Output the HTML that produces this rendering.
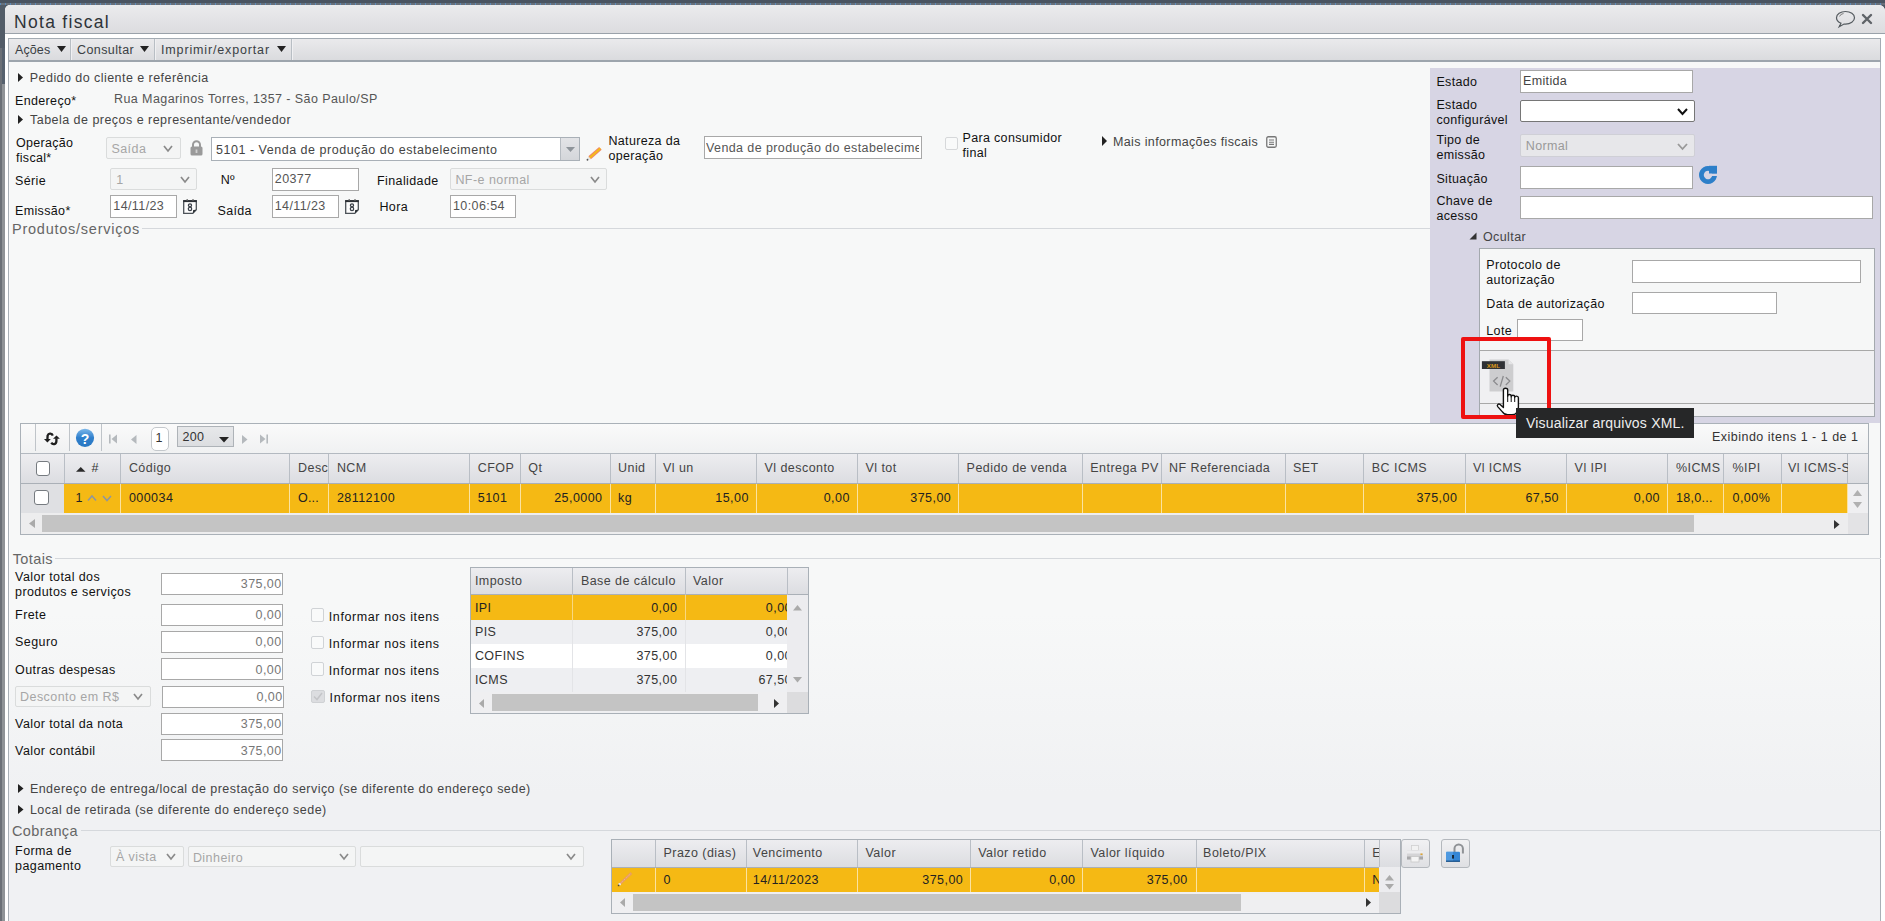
<!DOCTYPE html>
<html><head><meta charset="utf-8"><style>
html,body{margin:0;padding:0;width:1885px;height:921px;overflow:hidden;background:#4e5966;}
body{position:relative;font-family:"Liberation Sans",sans-serif;}
.t{position:absolute;white-space:nowrap;}
.r{position:absolute;}
svg.r{overflow:visible;}
</style></head><body>
<div class="r" style="left:0px;top:0px;width:1885px;height:5px;background:#4a5461;"></div>
<div class="r" style="left:0px;top:3px;width:1885px;height:2px;background:repeating-linear-gradient(90deg,#5c8fc4 0 1px,#6b737d 1px 5px);opacity:0.9;"></div>
<div class="r" style="left:0px;top:5px;width:5px;height:916px;background:#56606c;"></div>
<div class="r" style="left:5px;top:5px;width:1880px;height:916px;background:#fff;border-top-left-radius:5px;border-top-right-radius:6px;"></div>
<div class="r" style="left:5px;top:5px;width:1880px;height:29px;background:linear-gradient(#ebebed,#dcdcdf);border-top-left-radius:5px;border-top-right-radius:6px;border-bottom:1px solid #9aa2aa;box-sizing:border-box;height:29px;"></div>
<div class="t " style="left:14px;top:13.99px;font-size:17.5px;line-height:17.5px;color:#2e3338;letter-spacing:1.3px;">Nota fiscal</div>
<svg class="r" style="left:1835px;top:10px" width="21" height="18" viewBox="0 0 21 18"><path d="M10.5 1.5 C5.5 1.5 1.5 4.3 1.5 7.8 C1.5 10.2 3.3 12.2 6 13.2 L4.2 16.8 L9 14 C9.5 14.05 10 14.1 10.5 14.1 C15.5 14.1 19.5 11.3 19.5 7.8 C19.5 4.3 15.5 1.5 10.5 1.5 Z" fill="none" stroke="#555b60" stroke-width="1.2"/><path d="M4.6 6.4 C5.2 4.8 6.7 3.9 8.5 3.6" fill="none" stroke="#666" stroke-width="0.9"/></svg>
<svg class="r" style="left:1862px;top:14px" width="10" height="10" viewBox="0 0 10 10"><path d="M1 1 L9 9 M9 1 L1 9" stroke="#5f6368" stroke-width="2.4" stroke-linecap="round"/></svg>
<div class="r" style="left:8px;top:34px;width:1873px;height:887px;background:linear-gradient(180deg,#f7f8f8 0px,#f7f8f8 580px,#f0f1f3 760px,#f0f1f3 887px);"></div>
<div class="r" style="left:5px;top:34px;width:3px;height:887px;background:#ffffff;"></div>
<div class="r" style="left:1881px;top:34px;width:4px;height:887px;background:#ffffff;"></div>
<div class="r" style="left:8px;top:34px;width:1873px;height:4px;background:#ffffff;"></div>
<div class="r" style="left:8px;top:60px;width:1px;height:861px;background:#a9b0b7;"></div>
<div class="r" style="left:1880px;top:60px;width:1px;height:861px;background:#a9b0b7;"></div>
<div class="r" style="left:8px;top:38px;width:1873px;height:24px;box-sizing:border-box;border:1px solid #a3abb3;border-bottom:2px solid #9da5ad;background:linear-gradient(#eaeaec,#dadbde);"></div>
<div class="r" style="left:70px;top:39px;width:1px;height:21px;background:#b8bec4;"></div>
<div class="r" style="left:71px;top:39px;width:1px;height:21px;background:#f0f0f2;"></div>
<div class="r" style="left:154px;top:39px;width:1px;height:21px;background:#b8bec4;"></div>
<div class="r" style="left:155px;top:39px;width:1px;height:21px;background:#f0f0f2;"></div>
<div class="r" style="left:291px;top:39px;width:1px;height:21px;background:#b8bec4;"></div>
<div class="r" style="left:292px;top:39px;width:1px;height:21px;background:#f0f0f2;"></div>
<div class="t " style="left:15px;top:43.82px;font-size:12.5px;line-height:12.5px;color:#3a3f44;letter-spacing:0.1px;">Ações</div>
<svg class="r" style="left:57px;top:46px" width="9" height="6"><polygon points="0,0 9,0 4.5,6" fill="#222"/></svg>
<div class="t " style="left:77px;top:43.82px;font-size:12.5px;line-height:12.5px;color:#3a3f44;letter-spacing:0.4px;">Consultar</div>
<svg class="r" style="left:140px;top:46px" width="9" height="6"><polygon points="0,0 9,0 4.5,6" fill="#222"/></svg>
<div class="t " style="left:161px;top:43.82px;font-size:12.5px;line-height:12.5px;color:#3a3f44;letter-spacing:0.85px;">Imprimir/exportar</div>
<svg class="r" style="left:277px;top:46px" width="9" height="6"><polygon points="0,0 9,0 4.5,6" fill="#222"/></svg>
<div class="r" style="left:9px;top:62px;width:1871px;height:6px;background:#f7f8f8;"></div>
<div class="r" style="left:0px;top:5px;width:5px;height:916px;background:#525c68;"></div>
<div class="r" style="left:0px;top:48px;width:2px;height:873px;background:#6b7077;"></div>
<div class="r" style="left:2px;top:48px;width:3px;height:36px;background:#56616e;"></div>
<div class="r" style="left:2px;top:84px;width:3px;height:837px;background:#8f9397;"></div>
<svg class="r" style="left:18px;top:72.5px" width="5" height="9"><polygon points="0,0 5,4.5 0,9" fill="#222"/></svg>
<div class="t " style="left:29.8px;top:72.22px;font-size:12.5px;line-height:12.5px;color:#444;letter-spacing:0.45px;">Pedido do cliente e referência</div>
<div class="t " style="left:15px;top:95.22px;font-size:12.5px;line-height:12.5px;color:#111;letter-spacing:0.35px;">Endereço*</div>
<div class="t " style="left:114px;top:93.22px;font-size:12.5px;line-height:12.5px;color:#555;letter-spacing:0.42px;">Rua Magarinos Torres, 1357 - São Paulo/SP</div>
<svg class="r" style="left:18px;top:114.5px" width="5" height="9"><polygon points="0,0 5,4.5 0,9" fill="#222"/></svg>
<div class="t " style="left:30px;top:114.42px;font-size:12.5px;line-height:12.5px;color:#444;letter-spacing:0.47px;">Tabela de preços e representante/vendedor</div>
<div class="t " style="left:16px;top:137.42px;font-size:12.5px;line-height:12.5px;color:#111;letter-spacing:0.3px;">Operação</div>
<div class="t " style="left:16px;top:151.62px;font-size:12.5px;line-height:12.5px;color:#111;letter-spacing:0.3px;">fiscal*</div>
<div class="r" style="left:106px;top:137px;width:75px;height:22px;box-sizing:border-box;border:1px solid #dadcdc;background:#f4f5f5;border-radius:2px;"></div>
<div class="t " style="left:111.4px;top:143.42px;font-size:12.5px;line-height:12.5px;color:#a6a6a6;letter-spacing:0.45px;">Saída</div>
<svg class="r" style="left:163px;top:144.5px" width="10" height="8" viewBox="0 0 10 8"><polyline points="1,1 5.0,6 9,1" fill="none" stroke="#8a8a8a" stroke-width="1.7"/></svg>
<svg class="r" style="left:190px;top:140px" width="13" height="16" viewBox="0 0 13 16"><path d="M3 7 V4.8 A3.5 3.5 0 0 1 10 4.8 V7" fill="none" stroke="#9a9a9a" stroke-width="2"/><rect x="0.5" y="6.5" width="12" height="9" rx="1.5" fill="#9a9a9a"/><rect x="5.6" y="9.5" width="1.8" height="3.5" fill="#d0d0d0"/></svg>
<div class="r" style="left:211px;top:137px;width:369px;height:24px;box-sizing:border-box;border:1px solid #a9b0b7;background:#fff;"></div>
<div class="r" style="left:560px;top:138px;width:19px;height:22px;background:linear-gradient(#e3e4e7,#d4d6da);border-left:1px solid #b7bcc2;box-sizing:border-box;"></div>
<svg class="r" style="left:565.5px;top:146.5px" width="9" height="5"><polygon points="0,0 9,0 4.5,5" fill="#8e949a"/></svg>
<div class="t " style="left:216px;top:144.32px;font-size:12.5px;line-height:12.5px;color:#444;letter-spacing:0.52px;">5101 - Venda de produção do estabelecimento</div>
<svg class="r" style="left:582px;top:142px" width="24" height="24" viewBox="0 0 24 24"><line x1="7.6" y1="15.8" x2="18.4" y2="6.4" stroke="#f08a62" stroke-width="3.9"/><line x1="7.6" y1="15.8" x2="18.4" y2="6.4" stroke="#f5bf12" stroke-width="1.7"/><polygon points="8.85,17.23 6.35,14.37 4.88,18.16" fill="#e4e4e4"/><circle cx="5.48" cy="17.76" r="0.9" fill="#555"/></svg>
<div class="t " style="left:608.4px;top:135.32px;font-size:12.5px;line-height:12.5px;color:#111;letter-spacing:0.35px;">Natureza da</div>
<div class="t " style="left:608.4px;top:149.62px;font-size:12.5px;line-height:12.5px;color:#111;letter-spacing:0.35px;">operação</div>
<div class="r" style="left:704px;top:136px;width:218px;height:23px;box-sizing:border-box;border:1px solid #a8a8a8;background:#fff;"></div>
<div class="t " style="left:706px;top:142.22px;font-size:12.5px;line-height:12.5px;color:#555;letter-spacing:0.4px;width:213px;overflow:hidden;">Venda de produção do estabelecime</div>
<div class="r" style="left:944.5px;top:137px;width:13px;height:13px;box-sizing:border-box;border:1px solid #d6d8da;border-radius:2px;background:#f9fafa;"></div>
<div class="t " style="left:962.5px;top:132.32px;font-size:12.5px;line-height:12.5px;color:#111;letter-spacing:0.33px;">Para consumidor</div>
<div class="t " style="left:962.5px;top:146.82px;font-size:12.5px;line-height:12.5px;color:#111;letter-spacing:0.33px;">final</div>
<svg class="r" style="left:1102px;top:135.5px" width="5" height="10"><polygon points="0,0 5,5.0 0,10" fill="#222"/></svg>
<div class="t " style="left:1113px;top:135.82px;font-size:12.5px;line-height:12.5px;color:#444;letter-spacing:0.37px;">Mais informações fiscais</div>
<svg class="r" style="left:1266px;top:136px" width="11" height="12" viewBox="0 0 11 12"><rect x="0.75" y="0.75" width="9.5" height="10.5" rx="1.5" fill="none" stroke="#777" stroke-width="1.3"/><path d="M3 4 H8 M3 6.2 H8 M3 8.4 H8" stroke="#777" stroke-width="1.1"/></svg>
<div class="t " style="left:15px;top:175.12px;font-size:12.5px;line-height:12.5px;color:#111;letter-spacing:0.35px;">Série</div>
<div class="r" style="left:110px;top:168px;width:87px;height:22px;box-sizing:border-box;border:1px solid #dadcdc;background:#f4f5f5;border-radius:2px;"></div>
<div class="t " style="left:116.2px;top:174.32px;font-size:12.5px;line-height:12.5px;color:#a6a6a6;letter-spacing:0.45px;">1</div>
<svg class="r" style="left:180px;top:175.5px" width="10" height="8" viewBox="0 0 10 8"><polyline points="1,1 5.0,6 9,1" fill="none" stroke="#8a8a8a" stroke-width="1.7"/></svg>
<div class="t " style="left:220.7px;top:174.42px;font-size:12.5px;line-height:12.5px;color:#111;letter-spacing:0.3px;">Nº</div>
<div class="r" style="left:272px;top:168px;width:87px;height:23px;box-sizing:border-box;border:1px solid #a8a8a8;background:#fff;"></div>
<div class="t " style="left:274.8px;top:173.42px;font-size:12.5px;line-height:12.5px;color:#555;letter-spacing:0.4px;">20377</div>
<div class="t " style="left:377px;top:175.32px;font-size:12.5px;line-height:12.5px;color:#111;letter-spacing:0.4px;">Finalidade</div>
<div class="r" style="left:450px;top:168px;width:157px;height:22px;box-sizing:border-box;border:1px solid #dadcdc;background:#f4f5f5;border-radius:2px;"></div>
<div class="t " style="left:455.4px;top:174.32px;font-size:12.5px;line-height:12.5px;color:#a6a6a6;letter-spacing:0.45px;">NF-e normal</div>
<svg class="r" style="left:589.5px;top:175.5px" width="10" height="8" viewBox="0 0 10 8"><polyline points="1,1 5.0,6 9,1" fill="none" stroke="#8a8a8a" stroke-width="1.7"/></svg>
<div class="t " style="left:15px;top:205.02px;font-size:12.5px;line-height:12.5px;color:#111;letter-spacing:0.35px;">Emissão*</div>
<div class="r" style="left:110px;top:195px;width:67px;height:23px;box-sizing:border-box;border:1px solid #a8a8a8;background:#fff;"></div>
<div class="t " style="left:113.3px;top:200.12px;font-size:12.5px;line-height:12.5px;color:#555;letter-spacing:0.4px;">14/11/23</div>
<div class="t " style="left:217.5px;top:204.92px;font-size:12.5px;line-height:12.5px;color:#111;letter-spacing:0.35px;">Saída</div>
<div class="r" style="left:272px;top:195px;width:67px;height:23px;box-sizing:border-box;border:1px solid #a8a8a8;background:#fff;"></div>
<div class="t " style="left:274.7px;top:200.12px;font-size:12.5px;line-height:12.5px;color:#555;letter-spacing:0.4px;">14/11/23</div>
<div class="t " style="left:379.4px;top:200.92px;font-size:12.5px;line-height:12.5px;color:#111;letter-spacing:0.4px;">Hora</div>
<div class="r" style="left:450px;top:195px;width:66px;height:23px;box-sizing:border-box;border:1px solid #a8a8a8;background:#fff;"></div>
<div class="t " style="left:453px;top:200.22px;font-size:12.5px;line-height:12.5px;color:#555;letter-spacing:0.4px;">10:06:54</div>
<svg class="r" style="left:183px;top:199px" width="15" height="16" viewBox="0 0 15 16"><path d="M0.7 1.8 H13.3 V10.8 L9.8 14.4 H0.7 Z" fill="#fdfdfd" stroke="#4c5258" stroke-width="1.3"/><rect x="0.2" y="1.1" width="13.6" height="2" fill="#2c3035"/><rect x="3.5" y="0" width="1.4" height="1.6" fill="#777"/><rect x="9.3" y="0" width="1.4" height="1.6" fill="#777"/><path d="M9.8 14.4 L10.2 11 L13.3 10.8 Z" fill="#2c3035"/><ellipse cx="7" cy="6.3" rx="1.55" ry="1.5" fill="none" stroke="#3a4048" stroke-width="1.3"/><ellipse cx="7" cy="9.9" rx="1.65" ry="1.75" fill="none" stroke="#3a4048" stroke-width="1.3"/></svg>
<svg class="r" style="left:345px;top:199px" width="15" height="16" viewBox="0 0 15 16"><path d="M0.7 1.8 H13.3 V10.8 L9.8 14.4 H0.7 Z" fill="#fdfdfd" stroke="#4c5258" stroke-width="1.3"/><rect x="0.2" y="1.1" width="13.6" height="2" fill="#2c3035"/><rect x="3.5" y="0" width="1.4" height="1.6" fill="#777"/><rect x="9.3" y="0" width="1.4" height="1.6" fill="#777"/><path d="M9.8 14.4 L10.2 11 L13.3 10.8 Z" fill="#2c3035"/><ellipse cx="7" cy="6.3" rx="1.55" ry="1.5" fill="none" stroke="#3a4048" stroke-width="1.3"/><ellipse cx="7" cy="9.9" rx="1.65" ry="1.75" fill="none" stroke="#3a4048" stroke-width="1.3"/></svg>
<div class="t " style="left:12px;top:222.33px;font-size:14.5px;line-height:14.5px;color:#666;letter-spacing:0.75px;">Produtos/serviços</div>
<div class="r" style="left:142px;top:228px;width:1288px;height:1px;background:#d5d8dc;"></div>
<div class="r" style="left:1430px;top:68px;width:450px;height:355px;background:#d7d5e4;"></div>
<div class="t " style="left:1436.4px;top:75.62px;font-size:12.5px;line-height:12.5px;color:#111;letter-spacing:0.35px;">Estado</div>
<div class="r" style="left:1520px;top:70px;width:173px;height:23px;box-sizing:border-box;border:1px solid #a8a8a8;background:#fff;"></div>
<div class="t " style="left:1523px;top:75.22px;font-size:12.5px;line-height:12.5px;color:#444;letter-spacing:0.35px;">Emitida</div>
<div class="t " style="left:1436.4px;top:98.72px;font-size:12.5px;line-height:12.5px;color:#111;letter-spacing:0.35px;">Estado</div>
<div class="t " style="left:1436.4px;top:114.22px;font-size:12.5px;line-height:12.5px;color:#111;letter-spacing:0.35px;">configurável</div>
<div class="r" style="left:1520px;top:100px;width:175px;height:22px;box-sizing:border-box;border:1px solid #767676;border-radius:2px;background:#fff;"></div>
<svg class="r" style="left:1677px;top:108px" width="11" height="8" viewBox="0 0 11 8"><polyline points="1,1 5.5,6 10,1" fill="none" stroke="#111" stroke-width="2"/></svg>
<div class="t " style="left:1436.4px;top:134.22px;font-size:12.5px;line-height:12.5px;color:#111;letter-spacing:0.35px;">Tipo de</div>
<div class="t " style="left:1436.4px;top:148.82px;font-size:12.5px;line-height:12.5px;color:#111;letter-spacing:0.35px;">emissão</div>
<div class="r" style="left:1520px;top:134px;width:175px;height:23px;box-sizing:border-box;border:1px solid #cfcfd6;border-radius:2px;background:#e7e7ea;"></div>
<div class="t " style="left:1525.8px;top:140.12px;font-size:12.5px;line-height:12.5px;color:#999;letter-spacing:0.35px;">Normal</div>
<svg class="r" style="left:1677px;top:142.5px" width="11" height="8" viewBox="0 0 11 8"><polyline points="1,1 5.5,6 10,1" fill="none" stroke="#999" stroke-width="1.8"/></svg>
<div class="t " style="left:1436.4px;top:173.02px;font-size:12.5px;line-height:12.5px;color:#111;letter-spacing:0.35px;">Situação</div>
<div class="r" style="left:1520px;top:166px;width:173px;height:23px;box-sizing:border-box;border:1px solid #a8a8a8;background:#fff;"></div>
<svg class="r" style="left:1698px;top:165px" width="20" height="20" viewBox="0 0 20 20"><path d="M10 1 A9 9 0 1 0 10.01 1 Z M10 5.8 A4.2 4.2 0 1 1 9.99 5.8 Z" fill-rule="evenodd" fill="#2d7fc9"/><rect x="11" y="0.8" width="8" height="7.9" fill="#2d7fc9"/><rect x="10" y="8.7" width="10" height="2.3" fill="#d7d5e4"/></svg>
<div class="t " style="left:1436.4px;top:195.02px;font-size:12.5px;line-height:12.5px;color:#111;letter-spacing:0.35px;">Chave de</div>
<div class="t " style="left:1436.4px;top:209.62px;font-size:12.5px;line-height:12.5px;color:#111;letter-spacing:0.35px;">acesso</div>
<div class="r" style="left:1520px;top:196px;width:353px;height:23px;box-sizing:border-box;border:1px solid #a8a8a8;background:#fff;"></div>
<svg class="r" style="left:1469px;top:232px" width="8" height="8"><polygon points="7.5,0.5 7.5,7.5 0.5,7.5" fill="#333"/></svg>
<div class="t " style="left:1483px;top:231.42px;font-size:12.5px;line-height:12.5px;color:#444;letter-spacing:0.4px;">Ocultar</div>
<div class="r" style="left:1479px;top:248px;width:396px;height:169px;box-sizing:border-box;border:1px solid #a4a9ae;background:#f6f7f7;"></div>
<div class="t " style="left:1486.3px;top:259.12px;font-size:12.5px;line-height:12.5px;color:#111;letter-spacing:0.35px;">Protocolo de</div>
<div class="t " style="left:1486.3px;top:274.02px;font-size:12.5px;line-height:12.5px;color:#111;letter-spacing:0.35px;">autorização</div>
<div class="r" style="left:1632px;top:260px;width:229px;height:23px;box-sizing:border-box;border:1px solid #a8a8a8;background:#fff;"></div>
<div class="t " style="left:1486.3px;top:297.92px;font-size:12.5px;line-height:12.5px;color:#111;letter-spacing:0.35px;">Data de autorização</div>
<div class="r" style="left:1632px;top:292px;width:145px;height:22px;box-sizing:border-box;border:1px solid #a8a8a8;background:#fff;"></div>
<div class="t " style="left:1486.3px;top:325.02px;font-size:12.5px;line-height:12.5px;color:#111;letter-spacing:0.35px;">Lote</div>
<div class="r" style="left:1517px;top:319px;width:66px;height:22px;box-sizing:border-box;border:1px solid #a8a8a8;background:#fff;"></div>
<div class="r" style="left:1480px;top:350px;width:394px;height:54px;border-top:1px solid #a8a8a8;border-bottom:1px solid #a8a8a8;background:#f0f0f2;box-sizing:border-box;"></div>
<div class="r" style="left:1480px;top:404px;width:394px;height:12px;background:#f0f0f2;"></div>
<div class="r" style="left:20px;top:423px;width:1849px;height:112px;box-sizing:border-box;border:1px solid #aab1b8;background:#f5f6f6;"></div>
<div class="r" style="left:21px;top:424px;width:1847px;height:29px;background:linear-gradient(#fafafa,#f0f1f2);"></div>
<div class="r" style="left:35px;top:424px;width:1px;height:27px;background:#bfc4c9;"></div>
<div class="r" style="left:69px;top:424px;width:1px;height:27px;background:#bfc4c9;"></div>
<div class="r" style="left:101px;top:424px;width:1px;height:27px;background:#bfc4c9;"></div>
<svg class="r" style="left:43px;top:432px" width="18" height="14" viewBox="0 0 18 14"><path d="M9.7 3.6 C9.2 1.6 5.6 0.6 4.6 3.6 L4.4 7.6" fill="none" stroke="#1e1e1e" stroke-width="2.3"/><polygon points="1,6.9 7.8,6.9 4.4,10.4" fill="#1e1e1e"/><path d="M13.4 6.2 L13.4 9 C13.4 12.6 9.6 12.9 8.3 10.6" fill="none" stroke="#1e1e1e" stroke-width="2.3"/><polygon points="10,6.8 16.9,6.8 13.45,3.4" fill="#1e1e1e"/></svg>
<svg class="r" style="left:75px;top:428px" width="20" height="20" viewBox="0 0 20 20"><defs><linearGradient id="hg" x1="0" y1="0" x2="0" y2="1"><stop offset="0" stop-color="#7db8ea"/><stop offset="0.5" stop-color="#2f7fcc"/><stop offset="1" stop-color="#2a78c2"/></linearGradient></defs><circle cx="10" cy="9.8" r="9.1" fill="url(#hg)"/><text x="10" y="15.6" font-family="Liberation Sans" font-weight="bold" font-size="14" text-anchor="middle" fill="#fff">?</text></svg>
<svg class="r" style="left:109px;top:434px" width="9" height="10"><rect x="0" y="0.5" width="1.6" height="9" fill="#b5b9bd"/><polygon points="8,0.5 2.5,5 8,9.5" fill="#b5b9bd"/></svg>
<svg class="r" style="left:130.5px;top:434.5px" width="5.5" height="9"><polygon points="5.5,0 0,4.5 5.5,9" fill="#b5b9bd"/></svg>
<div class="r" style="left:151px;top:427px;width:18px;height:24px;box-sizing:border-box;border:1px solid #c4c8cc;border-radius:5px;background:#fff;"></div>
<div class="t " style="left:155.5px;top:431.92px;font-size:12.5px;line-height:12.5px;color:#333;letter-spacing:0px;">1</div>
<div class="r" style="left:177px;top:426px;width:57px;height:21px;box-sizing:border-box;border:1px solid #aeb3b8;background:linear-gradient(#e7e8ea,#dcdee1);"></div>
<div class="t " style="left:182.4px;top:431.02px;font-size:12.5px;line-height:12.5px;color:#333;letter-spacing:0.4px;">200</div>
<svg class="r" style="left:219px;top:436.5px" width="10" height="5.5"><polygon points="0,0 10,0 5.0,5.5" fill="#222"/></svg>
<svg class="r" style="left:242px;top:434.5px" width="5.5" height="9"><polygon points="0,0 5.5,4.5 0,9" fill="#b5b9bd"/></svg>
<svg class="r" style="left:260px;top:434px" width="9" height="10"><polygon points="0,0.5 5.5,5 0,9.5" fill="#b5b9bd"/><rect x="6.4" y="0.5" width="1.6" height="9" fill="#b5b9bd"/></svg>
<div class="t " style="right:26.5px;top:431.22px;font-size:12.5px;line-height:12.5px;color:#333;letter-spacing:0.5px;text-align:right;">Exibindo itens 1 - 1 de 1</div>
<div class="r" style="left:21px;top:453px;width:1847px;height:31px;box-sizing:border-box;border-top:1px solid #b3b9c0;border-bottom:1px solid #aab0b7;background:linear-gradient(#ededf0,#dcdde1);"></div>
<div class="r" style="left:64px;top:484px;width:1783px;height:29px;background:#f5b914;"></div>
<div class="r" style="left:21px;top:484px;width:43px;height:29px;background:#dfe0e3;"></div>
<div class="r" style="left:1848px;top:484px;width:20px;height:29px;background:#efeff1;"></div>
<svg class="r" style="left:1853px;top:489.5px" width="9" height="6"><polygon points="0,6 9,6 4.5,0" fill="#b0b0b0"/></svg>
<svg class="r" style="left:1853px;top:502px" width="9" height="6"><polygon points="0,0 9,0 4.5,6" fill="#b0b0b0"/></svg>
<div class="r" style="left:21px;top:513px;width:1827px;height:21px;background:#ededee;"></div>
<div class="r" style="left:42px;top:515px;width:1652px;height:17px;background:#c4c4c4;"></div>
<svg class="r" style="left:28.5px;top:519px" width="6" height="9"><polygon points="6,0 0,4.5 6,9" fill="#aaa"/></svg>
<svg class="r" style="left:1834px;top:519.5px" width="5.5" height="9"><polygon points="0,0 5.5,4.5 0,9" fill="#333"/></svg>
<div class="r" style="left:1848px;top:513px;width:20px;height:21px;background:#e3e3e5;"></div>
<div class="r" style="left:64px;top:454px;width:1px;height:29px;background:#b9bec5;"></div>
<div class="r" style="left:120px;top:454px;width:1px;height:29px;background:#b9bec5;"></div>
<div class="r" style="left:120px;top:484px;width:1px;height:29px;background:#fbe3a0;"></div>
<div class="r" style="left:289px;top:454px;width:1px;height:29px;background:#b9bec5;"></div>
<div class="r" style="left:289px;top:484px;width:1px;height:29px;background:#fbe3a0;"></div>
<div class="r" style="left:328px;top:454px;width:1px;height:29px;background:#b9bec5;"></div>
<div class="r" style="left:328px;top:484px;width:1px;height:29px;background:#fbe3a0;"></div>
<div class="r" style="left:469px;top:454px;width:1px;height:29px;background:#b9bec5;"></div>
<div class="r" style="left:469px;top:484px;width:1px;height:29px;background:#fbe3a0;"></div>
<div class="r" style="left:520px;top:454px;width:1px;height:29px;background:#b9bec5;"></div>
<div class="r" style="left:520px;top:484px;width:1px;height:29px;background:#fbe3a0;"></div>
<div class="r" style="left:610px;top:454px;width:1px;height:29px;background:#b9bec5;"></div>
<div class="r" style="left:610px;top:484px;width:1px;height:29px;background:#fbe3a0;"></div>
<div class="r" style="left:655px;top:454px;width:1px;height:29px;background:#b9bec5;"></div>
<div class="r" style="left:655px;top:484px;width:1px;height:29px;background:#fbe3a0;"></div>
<div class="r" style="left:756px;top:454px;width:1px;height:29px;background:#b9bec5;"></div>
<div class="r" style="left:756px;top:484px;width:1px;height:29px;background:#fbe3a0;"></div>
<div class="r" style="left:857px;top:454px;width:1px;height:29px;background:#b9bec5;"></div>
<div class="r" style="left:857px;top:484px;width:1px;height:29px;background:#fbe3a0;"></div>
<div class="r" style="left:958px;top:454px;width:1px;height:29px;background:#b9bec5;"></div>
<div class="r" style="left:958px;top:484px;width:1px;height:29px;background:#fbe3a0;"></div>
<div class="r" style="left:1082px;top:454px;width:1px;height:29px;background:#b9bec5;"></div>
<div class="r" style="left:1082px;top:484px;width:1px;height:29px;background:#fbe3a0;"></div>
<div class="r" style="left:1161px;top:454px;width:1px;height:29px;background:#b9bec5;"></div>
<div class="r" style="left:1161px;top:484px;width:1px;height:29px;background:#fbe3a0;"></div>
<div class="r" style="left:1285px;top:454px;width:1px;height:29px;background:#b9bec5;"></div>
<div class="r" style="left:1285px;top:484px;width:1px;height:29px;background:#fbe3a0;"></div>
<div class="r" style="left:1363px;top:454px;width:1px;height:29px;background:#b9bec5;"></div>
<div class="r" style="left:1363px;top:484px;width:1px;height:29px;background:#fbe3a0;"></div>
<div class="r" style="left:1465px;top:454px;width:1px;height:29px;background:#b9bec5;"></div>
<div class="r" style="left:1465px;top:484px;width:1px;height:29px;background:#fbe3a0;"></div>
<div class="r" style="left:1566px;top:454px;width:1px;height:29px;background:#b9bec5;"></div>
<div class="r" style="left:1566px;top:484px;width:1px;height:29px;background:#fbe3a0;"></div>
<div class="r" style="left:1667px;top:454px;width:1px;height:29px;background:#b9bec5;"></div>
<div class="r" style="left:1667px;top:484px;width:1px;height:29px;background:#fbe3a0;"></div>
<div class="r" style="left:1723px;top:454px;width:1px;height:29px;background:#b9bec5;"></div>
<div class="r" style="left:1723px;top:484px;width:1px;height:29px;background:#fbe3a0;"></div>
<div class="r" style="left:1781px;top:454px;width:1px;height:29px;background:#b9bec5;"></div>
<div class="r" style="left:1781px;top:484px;width:1px;height:29px;background:#fbe3a0;"></div>
<div class="r" style="left:1847px;top:454px;width:1px;height:29px;background:#b9bec5;"></div>
<div class="r" style="left:1847px;top:484px;width:1px;height:29px;background:#fbe3a0;"></div>
<div class="r" style="left:36px;top:461px;width:14px;height:14.5px;box-sizing:border-box;border:1px solid #767b80;border-radius:3px;background:#fff;"></div>
<div class="r" style="left:34px;top:490px;width:14.5px;height:14.5px;box-sizing:border-box;border:1px solid #767b80;border-radius:3px;background:#fff;"></div>
<svg class="r" style="left:76px;top:466.5px" width="9.5" height="4.8"><polygon points="0,4.8 9.5,4.8 4.75,0" fill="#2a2a2a"/></svg>
<div class="t " style="left:91.4px;top:462.42px;font-size:12.5px;line-height:12.5px;color:#333;letter-spacing:0px;">#</div>
<div class="t " style="left:128.9px;top:462.42px;font-size:12.5px;line-height:12.5px;color:#444;letter-spacing:0.45px;">Código</div>
<div class="t " style="left:298px;top:462.42px;font-size:12.5px;line-height:12.5px;color:#444;letter-spacing:0.45px;width:30px;overflow:hidden;">Desc</div>
<div class="t " style="left:336.9px;top:462.42px;font-size:12.5px;line-height:12.5px;color:#444;letter-spacing:0.45px;">NCM</div>
<div class="t " style="left:477.8px;top:462.42px;font-size:12.5px;line-height:12.5px;color:#444;letter-spacing:0.45px;">CFOP</div>
<div class="t " style="left:528.3px;top:462.42px;font-size:12.5px;line-height:12.5px;color:#444;letter-spacing:0.45px;">Qt</div>
<div class="t " style="left:618px;top:462.42px;font-size:12.5px;line-height:12.5px;color:#444;letter-spacing:0.45px;">Unid</div>
<div class="t " style="left:663px;top:462.42px;font-size:12.5px;line-height:12.5px;color:#444;letter-spacing:0.45px;">Vl un</div>
<div class="t " style="left:764.5px;top:462.42px;font-size:12.5px;line-height:12.5px;color:#444;letter-spacing:0.45px;">Vl desconto</div>
<div class="t " style="left:865.5px;top:462.42px;font-size:12.5px;line-height:12.5px;color:#444;letter-spacing:0.45px;">Vl tot</div>
<div class="t " style="left:966.6px;top:462.42px;font-size:12.5px;line-height:12.5px;color:#444;letter-spacing:0.45px;">Pedido de venda</div>
<div class="t " style="left:1090.3px;top:462.42px;font-size:12.5px;line-height:12.5px;color:#444;letter-spacing:0.45px;">Entrega PV</div>
<div class="t " style="left:1169px;top:462.42px;font-size:12.5px;line-height:12.5px;color:#444;letter-spacing:0.45px;width:115px;overflow:hidden;">NF Referenciada</div>
<div class="t " style="left:1293px;top:462.42px;font-size:12.5px;line-height:12.5px;color:#444;letter-spacing:0.45px;">SET</div>
<div class="t " style="left:1371.8px;top:462.42px;font-size:12.5px;line-height:12.5px;color:#444;letter-spacing:0.45px;">BC ICMS</div>
<div class="t " style="left:1472.9px;top:462.42px;font-size:12.5px;line-height:12.5px;color:#444;letter-spacing:0.45px;">Vl ICMS</div>
<div class="t " style="left:1574.6px;top:462.42px;font-size:12.5px;line-height:12.5px;color:#444;letter-spacing:0.45px;">Vl IPI</div>
<div class="t " style="left:1675.9px;top:462.42px;font-size:12.5px;line-height:12.5px;color:#444;letter-spacing:0.45px;width:47px;overflow:hidden;">%ICMS</div>
<div class="t " style="left:1732.5px;top:462.42px;font-size:12.5px;line-height:12.5px;color:#444;letter-spacing:0.45px;">%IPI</div>
<div class="t " style="left:1787.9px;top:462.42px;font-size:12.5px;line-height:12.5px;color:#444;letter-spacing:0.45px;width:60px;overflow:hidden;">Vl ICMS-ST</div>
<div class="t " style="left:75.4px;top:492.42px;font-size:12.5px;line-height:12.5px;color:#222;letter-spacing:0px;">1</div>
<svg class="r" style="left:102px;top:495px" width="10" height="7"><polyline points="1,1 5,5.5 9,1" fill="none" stroke="#8e96a0" stroke-width="1.5"/></svg>
<svg class="r" style="left:87px;top:495px" width="10" height="7"><polyline points="1,5.5 5,1 9,5.5" fill="none" stroke="#8e96a0" stroke-width="1.5"/></svg>
<div class="t " style="left:128.9px;top:492.42px;font-size:12.5px;line-height:12.5px;color:#222;letter-spacing:0.45px;">000034</div>
<div class="t " style="left:298px;top:492.42px;font-size:12.5px;line-height:12.5px;color:#222;letter-spacing:0.2px;">O...</div>
<div class="t " style="left:336.9px;top:492.42px;font-size:12.5px;line-height:12.5px;color:#222;letter-spacing:0.45px;">28112100</div>
<div class="t " style="left:477.8px;top:492.42px;font-size:12.5px;line-height:12.5px;color:#222;letter-spacing:0.45px;">5101</div>
<div class="t " style="right:1282.5px;top:492.42px;font-size:12.5px;line-height:12.5px;color:#222;letter-spacing:0.45px;text-align:right;">25,0000</div>
<div class="t " style="left:618px;top:492.42px;font-size:12.5px;line-height:12.5px;color:#222;letter-spacing:0.45px;">kg</div>
<div class="t " style="right:1136.2px;top:492.42px;font-size:12.5px;line-height:12.5px;color:#222;letter-spacing:0.45px;text-align:right;">15,00</div>
<div class="t " style="right:1035.2px;top:492.42px;font-size:12.5px;line-height:12.5px;color:#222;letter-spacing:0.45px;text-align:right;">0,00</div>
<div class="t " style="right:933.8px;top:492.42px;font-size:12.5px;line-height:12.5px;color:#222;letter-spacing:0.45px;text-align:right;">375,00</div>
<div class="t " style="right:427.70000000000005px;top:492.42px;font-size:12.5px;line-height:12.5px;color:#222;letter-spacing:0.45px;text-align:right;">375,00</div>
<div class="t " style="right:326px;top:492.42px;font-size:12.5px;line-height:12.5px;color:#222;letter-spacing:0.45px;text-align:right;">67,50</div>
<div class="t " style="right:225px;top:492.42px;font-size:12.5px;line-height:12.5px;color:#222;letter-spacing:0.45px;text-align:right;">0,00</div>
<div class="t " style="left:1676px;top:492.42px;font-size:12.5px;line-height:12.5px;color:#222;letter-spacing:0.3px;">18,0...</div>
<div class="t " style="left:1732.5px;top:492.42px;font-size:12.5px;line-height:12.5px;color:#222;letter-spacing:0.45px;">0,00%</div>
<svg class="r" style="left:1481px;top:358px" width="34" height="35" viewBox="0 0 34 35"><path d="M8.5 1.4 H27.5 L32.3 6.2 V33.5 H8.5 Z" fill="#cdcdcf"/><path d="M27.5 1.4 L32.3 6.2 H27.5 Z" fill="#e4e4e6"/><rect x="0.9" y="3.2" width="23" height="7.8" fill="#2f3135"/><text x="12.4" y="9.6" font-family="Liberation Sans" font-size="6.2" font-weight="bold" text-anchor="middle" fill="#d9961c">XML</text><path d="M16.6 19.2 L12.6 23.1 L16.6 27 M22.3 18 L19.2 28.6 M24.8 19.2 L28.8 23.1 L24.8 27" fill="none" stroke="#8a8a8d" stroke-width="1.3"/></svg>
<svg class="r" style="left:1496px;top:387px" width="25" height="30" viewBox="0 0 25 30"><path d="M7.4 3 C7.4 0.6 11.7 0.6 11.7 3 V9.2 C11.7 7 15.2 7 15.2 9.2 V9.8 C15.2 7.7 18.7 7.7 18.7 9.8 V10.6 C18.7 8.6 22.4 8.6 22.4 10.8 V20 C22.4 25 19.8 27.8 15.8 27.8 H11.6 C9.2 27.8 7.6 26.6 6.2 24.6 L1.7 19.6 C0.6 18.2 2.4 16.2 4.1 17.5 L7.4 20.6 Z" fill="#fff" stroke="#111" stroke-width="1.4" stroke-linejoin="round"/><path d="M11.7 9.2 V15 M15.2 9.8 V15 M18.7 10.6 V15" stroke="#111" stroke-width="1"/></svg>
<div class="r" style="left:1461px;top:337px;width:90px;height:82px;box-sizing:border-box;border:4px solid #ee1111;border-radius:2px;"></div>
<div class="r" style="left:1516px;top:408px;width:178px;height:30px;background:#262728;"></div>
<div class="t " style="left:1526px;top:416.35px;font-size:14px;line-height:14px;color:#eeeeee;letter-spacing:0.2px;">Visualizar arquivos XML.</div>
<div class="t " style="left:12.7px;top:552.33px;font-size:14.5px;line-height:14.5px;color:#666;letter-spacing:0.4px;">Totais</div>
<div class="r" style="left:55px;top:558px;width:1826px;height:1px;background:#d5d8dc;"></div>
<div class="t " style="left:15.1px;top:571.02px;font-size:12.5px;line-height:12.5px;color:#111;letter-spacing:0.4px;">Valor total dos</div>
<div class="t " style="left:15.1px;top:586.12px;font-size:12.5px;line-height:12.5px;color:#111;letter-spacing:0.4px;">produtos e serviços</div>
<div class="r" style="left:161px;top:573px;width:122px;height:22px;box-sizing:border-box;border:1px solid #a8a8a8;background:#fff;"></div>
<div class="t " style="right:1603.5px;top:578.22px;font-size:12.5px;line-height:12.5px;color:#777;letter-spacing:0.4px;text-align:right;">375,00</div>
<div class="t " style="left:15.1px;top:609.22px;font-size:12.5px;line-height:12.5px;color:#111;letter-spacing:0.4px;">Frete</div>
<div class="r" style="left:161px;top:604px;width:122px;height:22px;box-sizing:border-box;border:1px solid #a8a8a8;background:#fff;"></div>
<div class="t " style="right:1603.5px;top:609.32px;font-size:12.5px;line-height:12.5px;color:#777;letter-spacing:0.4px;text-align:right;">0,00</div>
<div class="t " style="left:15.1px;top:636.12px;font-size:12.5px;line-height:12.5px;color:#111;letter-spacing:0.4px;">Seguro</div>
<div class="r" style="left:161px;top:631px;width:122px;height:22px;box-sizing:border-box;border:1px solid #a8a8a8;background:#fff;"></div>
<div class="t " style="right:1603.5px;top:636.32px;font-size:12.5px;line-height:12.5px;color:#777;letter-spacing:0.4px;text-align:right;">0,00</div>
<div class="t " style="left:15.1px;top:664.22px;font-size:12.5px;line-height:12.5px;color:#111;letter-spacing:0.4px;">Outras despesas</div>
<div class="r" style="left:161px;top:658px;width:122px;height:22px;box-sizing:border-box;border:1px solid #a8a8a8;background:#fff;"></div>
<div class="t " style="right:1603.5px;top:663.72px;font-size:12.5px;line-height:12.5px;color:#777;letter-spacing:0.4px;text-align:right;">0,00</div>
<div class="r" style="left:15px;top:685.5px;width:136px;height:21px;box-sizing:border-box;border:1px solid #dadcdc;background:#f4f5f5;border-radius:2px;"></div>
<div class="t " style="left:20px;top:691.12px;font-size:12.5px;line-height:12.5px;color:#a6a6a6;letter-spacing:0.45px;">Desconto em R$</div>
<svg class="r" style="left:133px;top:692.5px" width="10" height="8" viewBox="0 0 10 8"><polyline points="1,1 5.0,6 9,1" fill="none" stroke="#8a8a8a" stroke-width="1.7"/></svg>
<div class="r" style="left:162px;top:685.5px;width:122px;height:22px;box-sizing:border-box;border:1px solid #a8a8a8;background:#fff;"></div>
<div class="t " style="right:1602.5px;top:690.92px;font-size:12.5px;line-height:12.5px;color:#777;letter-spacing:0.4px;text-align:right;">0,00</div>
<div class="t " style="left:15.1px;top:718.22px;font-size:12.5px;line-height:12.5px;color:#111;letter-spacing:0.4px;">Valor total da nota</div>
<div class="r" style="left:161px;top:712.5px;width:122px;height:22px;box-sizing:border-box;border:1px solid #a8a8a8;background:#fff;"></div>
<div class="t " style="right:1603.5px;top:717.72px;font-size:12.5px;line-height:12.5px;color:#777;letter-spacing:0.4px;text-align:right;">375,00</div>
<div class="t " style="left:15.1px;top:745.22px;font-size:12.5px;line-height:12.5px;color:#111;letter-spacing:0.4px;">Valor contábil</div>
<div class="r" style="left:161px;top:739.4px;width:122px;height:22px;box-sizing:border-box;border:1px solid #a8a8a8;background:#fff;"></div>
<div class="t " style="right:1603.5px;top:745.02px;font-size:12.5px;line-height:12.5px;color:#777;letter-spacing:0.4px;text-align:right;">375,00</div>
<div class="r" style="left:310.5px;top:608px;width:13.5px;height:13.5px;box-sizing:border-box;border:1px solid #d0d3d6;border-radius:2px;background:#f9fafa;"></div>
<div class="t " style="left:328.8px;top:611.22px;font-size:12.5px;line-height:12.5px;color:#111;letter-spacing:0.6px;">Informar nos itens</div>
<div class="r" style="left:310.5px;top:635.5px;width:13.5px;height:13.5px;box-sizing:border-box;border:1px solid #d0d3d6;border-radius:2px;background:#f9fafa;"></div>
<div class="t " style="left:328.8px;top:638.12px;font-size:12.5px;line-height:12.5px;color:#111;letter-spacing:0.6px;">Informar nos itens</div>
<div class="r" style="left:310.5px;top:662.4px;width:13.5px;height:13.5px;box-sizing:border-box;border:1px solid #d0d3d6;border-radius:2px;background:#f9fafa;"></div>
<div class="t " style="left:328.8px;top:665.02px;font-size:12.5px;line-height:12.5px;color:#111;letter-spacing:0.6px;">Informar nos itens</div>
<div class="r" style="left:311px;top:689.7px;width:13.5px;height:13.5px;box-sizing:border-box;border:1px solid #cfd1d4;border-radius:2px;background:#dcdde0;"></div>
<svg class="r" style="left:312px;top:691px" width="12" height="11"><polyline points="2,5.5 5,8.5 10,2" fill="none" stroke="#c4c5c8" stroke-width="1.5"/></svg>
<div class="t " style="left:329.6px;top:691.92px;font-size:12.5px;line-height:12.5px;color:#111;letter-spacing:0.6px;">Informar nos itens</div>
<div class="r" style="left:470px;top:567px;width:339px;height:147px;box-sizing:border-box;border:1px solid #a9b0b7;background:#eeeff1;"></div>
<div class="r" style="left:471px;top:568px;width:337px;height:27px;background:linear-gradient(#ededf0,#dcdde1);border-bottom:1px solid #aab0b7;box-sizing:border-box;"></div>
<div class="r" style="left:572px;top:568px;width:1px;height:27px;background:#b9bec5;"></div>
<div class="r" style="left:685px;top:568px;width:1px;height:27px;background:#b9bec5;"></div>
<div class="r" style="left:787px;top:568px;width:1px;height:27px;background:#b9bec5;"></div>
<div class="t " style="left:474.9px;top:575.22px;font-size:12.5px;line-height:12.5px;color:#444;letter-spacing:0.45px;">Imposto</div>
<div class="t " style="left:580.9px;top:575.22px;font-size:12.5px;line-height:12.5px;color:#444;letter-spacing:0.45px;">Base de cálculo</div>
<div class="t " style="left:693px;top:575.22px;font-size:12.5px;line-height:12.5px;color:#444;letter-spacing:0.45px;">Valor</div>
<div class="r" style="left:471px;top:595px;width:316px;height:24.5px;background:#f5b914;"></div>
<div class="r" style="left:471px;top:619.5px;width:316px;height:24.5px;background:#eeeff2;"></div>
<div class="r" style="left:471px;top:644px;width:316px;height:24px;background:#ffffff;"></div>
<div class="r" style="left:471px;top:668px;width:316px;height:24px;background:#eeeff2;"></div>
<div class="r" style="left:572px;top:595px;width:1px;height:24.5px;background:#f9d880;"></div>
<div class="r" style="left:572px;top:619.5px;width:1px;height:72.5px;background:#e3e4e7;"></div>
<div class="r" style="left:685px;top:595px;width:1px;height:24.5px;background:#f9d880;"></div>
<div class="r" style="left:685px;top:619.5px;width:1px;height:72.5px;background:#e3e4e7;"></div>
<div class="r" style="left:787px;top:595px;width:21px;height:97px;background:#ececef;"></div>
<svg class="r" style="left:793px;top:605px" width="9" height="5.5"><polygon points="0,5.5 9,5.5 4.5,0" fill="#aaa"/></svg>
<svg class="r" style="left:793px;top:677px" width="9" height="5.5"><polygon points="0,0 9,0 4.5,5.5" fill="#aaa"/></svg>
<div class="t " style="left:474.9px;top:602.02px;font-size:12.5px;line-height:12.5px;color:#222;letter-spacing:0.45px;">IPI</div>
<div class="t " style="right:1207.7px;top:602.02px;font-size:12.5px;line-height:12.5px;color:#222;letter-spacing:0.45px;text-align:right;">0,00</div>
<div class="t" style="left:686px;top:602.02px;width:101px;height:16px;overflow:hidden;font-size:12.5px;line-height:12.5px;color:#222;letter-spacing:0.45px;"><span style="position:absolute;right:-5px;top:0">0,00</span></div>
<div class="t " style="left:474.9px;top:625.82px;font-size:12.5px;line-height:12.5px;color:#333;letter-spacing:0.45px;">PIS</div>
<div class="t " style="right:1207.7px;top:625.82px;font-size:12.5px;line-height:12.5px;color:#333;letter-spacing:0.45px;text-align:right;">375,00</div>
<div class="t" style="left:686px;top:625.82px;width:101px;height:16px;overflow:hidden;font-size:12.5px;line-height:12.5px;color:#333;letter-spacing:0.45px;"><span style="position:absolute;right:-5px;top:0">0,00</span></div>
<div class="t " style="left:474.9px;top:649.72px;font-size:12.5px;line-height:12.5px;color:#333;letter-spacing:0.45px;">COFINS</div>
<div class="t " style="right:1207.7px;top:649.72px;font-size:12.5px;line-height:12.5px;color:#333;letter-spacing:0.45px;text-align:right;">375,00</div>
<div class="t" style="left:686px;top:649.72px;width:101px;height:16px;overflow:hidden;font-size:12.5px;line-height:12.5px;color:#333;letter-spacing:0.45px;"><span style="position:absolute;right:-5px;top:0">0,00</span></div>
<div class="t " style="left:474.9px;top:673.62px;font-size:12.5px;line-height:12.5px;color:#333;letter-spacing:0.45px;">ICMS</div>
<div class="t " style="right:1207.7px;top:673.62px;font-size:12.5px;line-height:12.5px;color:#333;letter-spacing:0.45px;text-align:right;">375,00</div>
<div class="t" style="left:686px;top:673.62px;width:101px;height:16px;overflow:hidden;font-size:12.5px;line-height:12.5px;color:#333;letter-spacing:0.45px;"><span style="position:absolute;right:-5px;top:0">67,50</span></div>
<div class="r" style="left:471px;top:692px;width:316px;height:21px;background:#efeff1;"></div>
<div class="r" style="left:492px;top:693.5px;width:266px;height:17.5px;background:#c4c4c4;"></div>
<svg class="r" style="left:479px;top:698.5px" width="5" height="9"><polygon points="5,0 0,4.5 5,9" fill="#aaa"/></svg>
<svg class="r" style="left:774px;top:698.5px" width="5" height="9"><polygon points="0,0 5,4.5 0,9" fill="#333"/></svg>
<div class="r" style="left:787px;top:692px;width:21px;height:21px;background:#dcdcde;"></div>
<svg class="r" style="left:17.5px;top:783.5px" width="5.5" height="9"><polygon points="0,0 5.5,4.5 0,9" fill="#222"/></svg>
<div class="t " style="left:29.9px;top:782.62px;font-size:12.5px;line-height:12.5px;color:#444;letter-spacing:0.47px;">Endereço de entrega/local de prestação do serviço (se diferente do endereço sede)</div>
<svg class="r" style="left:17.5px;top:804.7px" width="5.5" height="9"><polygon points="0,0 5.5,4.5 0,9" fill="#222"/></svg>
<div class="t " style="left:29.9px;top:804.22px;font-size:12.5px;line-height:12.5px;color:#444;letter-spacing:0.47px;">Local de retirada (se diferente do endereço sede)</div>
<div class="t " style="left:11.9px;top:824.33px;font-size:14.5px;line-height:14.5px;color:#666;letter-spacing:0.4px;">Cobrança</div>
<div class="r" style="left:81px;top:830px;width:1800px;height:1px;background:#d5d8dc;"></div>
<div class="t " style="left:15.1px;top:844.82px;font-size:12.5px;line-height:12.5px;color:#111;letter-spacing:0.4px;">Forma de</div>
<div class="t " style="left:15.1px;top:859.92px;font-size:12.5px;line-height:12.5px;color:#111;letter-spacing:0.4px;">pagamento</div>
<div class="r" style="left:110px;top:846.4px;width:74px;height:21px;box-sizing:border-box;border:1px solid #dadcdc;background:#f4f5f5;border-radius:2px;"></div>
<div class="t " style="left:115.9px;top:851.12px;font-size:12.5px;line-height:12.5px;color:#a6a6a6;letter-spacing:0.45px;">À vista</div>
<svg class="r" style="left:166.3px;top:853.4px" width="10" height="8" viewBox="0 0 10 8"><polyline points="1,1 5.0,6 9,1" fill="none" stroke="#8a8a8a" stroke-width="1.7"/></svg>
<div class="r" style="left:187.5px;top:846.4px;width:168px;height:21px;box-sizing:border-box;border:1px solid #dadcdc;background:#f4f5f5;border-radius:2px;"></div>
<div class="t " style="left:192.9px;top:851.72px;font-size:12.5px;line-height:12.5px;color:#a6a6a6;letter-spacing:0.45px;">Dinheiro</div>
<svg class="r" style="left:338.8px;top:853.4px" width="10" height="8" viewBox="0 0 10 8"><polyline points="1,1 5.0,6 9,1" fill="none" stroke="#8a8a8a" stroke-width="1.7"/></svg>
<div class="r" style="left:359.5px;top:846.4px;width:224.5px;height:21px;box-sizing:border-box;border:1px solid #dadcdc;background:#f4f5f5;border-radius:2px;"></div>
<svg class="r" style="left:566.4px;top:853.4px" width="10" height="8" viewBox="0 0 10 8"><polyline points="1,1 5.0,6 9,1" fill="none" stroke="#8a8a8a" stroke-width="1.7"/></svg>
<div class="r" style="left:611px;top:839px;width:790px;height:75px;box-sizing:border-box;border:1px solid #a9b0b7;background:#eeeff1;"></div>
<div class="r" style="left:612px;top:840px;width:767px;height:28px;background:linear-gradient(#ededf0,#dcdde1);border-bottom:1px solid #aab0b7;box-sizing:border-box;"></div>
<div class="r" style="left:1379px;top:840px;width:21px;height:28px;background:linear-gradient(#ededf0,#dcdde1);border-bottom:1px solid #aab0b7;border-left:1px solid #b9bec5;box-sizing:border-box;"></div>
<div class="r" style="left:612px;top:868px;width:767px;height:23.6px;background:#f5b914;"></div>
<div class="r" style="left:655px;top:840px;width:1px;height:27px;background:#b9bec5;"></div>
<div class="r" style="left:655px;top:868px;width:1px;height:23.6px;background:#fbe3a0;"></div>
<div class="r" style="left:745.6px;top:840px;width:1px;height:27px;background:#b9bec5;"></div>
<div class="r" style="left:745.6px;top:868px;width:1px;height:23.6px;background:#fbe3a0;"></div>
<div class="r" style="left:857.4px;top:840px;width:1px;height:27px;background:#b9bec5;"></div>
<div class="r" style="left:857.4px;top:868px;width:1px;height:23.6px;background:#fbe3a0;"></div>
<div class="r" style="left:970px;top:840px;width:1px;height:27px;background:#b9bec5;"></div>
<div class="r" style="left:970px;top:868px;width:1px;height:23.6px;background:#fbe3a0;"></div>
<div class="r" style="left:1082.3px;top:840px;width:1px;height:27px;background:#b9bec5;"></div>
<div class="r" style="left:1082.3px;top:868px;width:1px;height:23.6px;background:#fbe3a0;"></div>
<div class="r" style="left:1195.5px;top:840px;width:1px;height:27px;background:#b9bec5;"></div>
<div class="r" style="left:1195.5px;top:868px;width:1px;height:23.6px;background:#fbe3a0;"></div>
<div class="r" style="left:1364px;top:840px;width:1px;height:27px;background:#b9bec5;"></div>
<div class="r" style="left:1364px;top:868px;width:1px;height:23.6px;background:#fbe3a0;"></div>
<div class="t " style="left:663.5px;top:846.82px;font-size:12.5px;line-height:12.5px;color:#444;letter-spacing:0.45px;">Prazo (dias)</div>
<div class="t " style="left:752.8px;top:846.82px;font-size:12.5px;line-height:12.5px;color:#444;letter-spacing:0.45px;">Vencimento</div>
<div class="t " style="left:865.5px;top:846.82px;font-size:12.5px;line-height:12.5px;color:#444;letter-spacing:0.45px;">Valor</div>
<div class="t " style="left:978.2px;top:846.82px;font-size:12.5px;line-height:12.5px;color:#444;letter-spacing:0.45px;">Valor retido</div>
<div class="t " style="left:1090.4px;top:846.82px;font-size:12.5px;line-height:12.5px;color:#444;letter-spacing:0.45px;">Valor líquido</div>
<div class="t " style="left:1203.1px;top:846.82px;font-size:12.5px;line-height:12.5px;color:#444;letter-spacing:0.45px;">Boleto/PIX</div>
<div class="t " style="left:1372.2px;top:846.82px;font-size:12.5px;line-height:12.5px;color:#444;letter-spacing:0px;width:7px;overflow:hidden;">E</div>
<svg class="r" style="left:612px;top:868px" width="24" height="22" viewBox="0 0 24 22"><line x1="8.2" y1="15.6" x2="19.4" y2="5" stroke="#e9a05a" stroke-width="2.6"/><line x1="8.6" y1="15.2" x2="19" y2="5.4" stroke="#f2b0a0" stroke-width="1" stroke-dasharray="1.2 1.2"/><circle cx="7.6" cy="16.3" r="1.3" fill="#e8e8ee"/><circle cx="6.6" cy="17.4" r="0.9" fill="#5a4a20"/></svg>
<div class="t " style="left:663.5px;top:874.22px;font-size:12.5px;line-height:12.5px;color:#222;letter-spacing:0.45px;">0</div>
<div class="t " style="left:752.8px;top:874.22px;font-size:12.5px;line-height:12.5px;color:#222;letter-spacing:0.45px;">14/11/2023</div>
<div class="t " style="right:921.8px;top:874.22px;font-size:12.5px;line-height:12.5px;color:#222;letter-spacing:0.45px;text-align:right;">375,00</div>
<div class="t " style="right:809.5px;top:874.22px;font-size:12.5px;line-height:12.5px;color:#222;letter-spacing:0.45px;text-align:right;">0,00</div>
<div class="t " style="right:697.3px;top:874.22px;font-size:12.5px;line-height:12.5px;color:#222;letter-spacing:0.45px;text-align:right;">375,00</div>
<div class="t " style="left:1372.2px;top:874.22px;font-size:12.5px;line-height:12.5px;color:#222;letter-spacing:0px;width:7px;overflow:hidden;">N</div>
<div class="r" style="left:1379px;top:867px;width:21px;height:46px;background:#ececef;"></div>
<svg class="r" style="left:1385px;top:875px" width="9" height="5.5"><polygon points="0,5.5 9,5.5 4.5,0" fill="#aaa"/></svg>
<svg class="r" style="left:1385px;top:884px" width="9" height="5.5"><polygon points="0,0 9,0 4.5,5.5" fill="#aaa"/></svg>
<div class="r" style="left:612px;top:891.6px;width:767px;height:21.4px;background:#efeff1;"></div>
<div class="r" style="left:632.5px;top:893.5px;width:608.5px;height:17.5px;background:#c4c4c4;"></div>
<svg class="r" style="left:620px;top:898px" width="5" height="9"><polygon points="5,0 0,4.5 5,9" fill="#aaa"/></svg>
<svg class="r" style="left:1365.5px;top:898px" width="5" height="9"><polygon points="0,0 5,4.5 0,9" fill="#333"/></svg>
<div class="r" style="left:1379px;top:891.5px;width:21px;height:21.5px;background:#dcdcde;"></div>
<div class="r" style="left:1401px;top:839px;width:29px;height:29px;box-sizing:border-box;border:1px solid #b4b8bd;border-radius:3px;background:linear-gradient(#f1f1f3,#dfe0e3);"></div>
<div class="r" style="left:1441px;top:839px;width:29px;height:29px;box-sizing:border-box;border:1px solid #b4b8bd;border-radius:3px;background:linear-gradient(#f1f1f3,#dfe0e3);"></div>
<svg class="r" style="left:1405px;top:844px" width="20" height="19" viewBox="0 0 20 19"><rect x="6.5" y="1.5" width="7" height="5" fill="#f2f2f2" stroke="#d0d0d0" stroke-width="0.8"/><path d="M2 6.5 H18 V15.5 H2 Z" fill="#d4d4d6"/><rect x="2" y="6.5" width="16" height="3" fill="#ececee"/><rect x="2" y="12.5" width="16" height="3" fill="#a8a8aa"/><rect x="6" y="12.5" width="8" height="5.5" fill="#f4f4f4" stroke="#c8c8c8" stroke-width="0.8"/><rect x="15.5" y="9.5" width="2" height="1.4" fill="#e0a020"/></svg>
<svg class="r" style="left:1445px;top:843px" width="22" height="21" viewBox="0 0 22 21"><path d="M9.5 9.5 V5.6 A4.2 4.2 0 0 1 17.9 5.6 V10.6" fill="none" stroke="#8f9296" stroke-width="2"/><rect x="1" y="8.8" width="14" height="10" rx="1" fill="#3386d6"/><rect x="1" y="8.8" width="7" height="10" fill="#5fa6e6" opacity="0.6"/><rect x="1" y="17.6" width="14" height="1.2" fill="#1f4f80"/><rect x="7.2" y="12" width="1.6" height="3.6" fill="#111"/></svg>
</body></html>
